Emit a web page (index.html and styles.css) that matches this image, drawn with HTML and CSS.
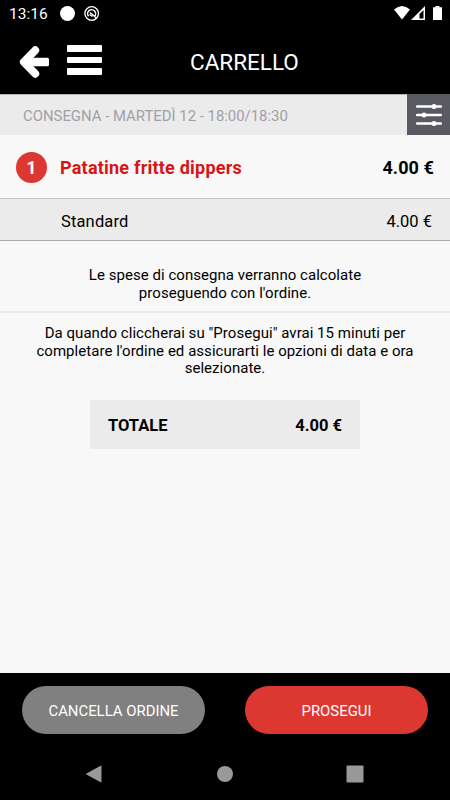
FILE: index.html
```html
<!DOCTYPE html>
<html lang="it">
<head>
    <meta charset="UTF-8">
    <meta name="viewport" content="width=device-width, initial-scale=1.0">
    <title>Carrello</title>
    <link rel="stylesheet" href="styles.css">
</head>
<body>
    <div class="status-bar">
        <span class="clock">13:16</span>
        <svg class="status-left" width="42" height="18" viewBox="0 0 42 18">
            <circle cx="7.500" cy="8.500" r="7.500" fill="#fff"/>
            <circle cx="31.700" cy="8.500" r="6.800" fill="none" stroke="#fff" stroke-width="1.300"/>
            <path d="M28.500 11.200A4 4 0 1 1 34.500 11.500M30 7.500l6.500 5.500M29.500 9.500l3 2" fill="none" stroke="#fff" stroke-width="1.500"/>
        </svg>
        <svg class="status-right" width="50" height="18" viewBox="0 0 50 18">
            <path d="M1 4.500Q9 -2.500 17 4.500L9 14.500z" fill="#fff"/>
            <path d="M32 1v14H18z" fill="#fff"/>
            <path d="M30.500 5v8.500H26.500V9z" fill="#000"/>
            <path d="M40 2.200h2.500V1h4v1.200H49V15h-9z" fill="#fff"/>
        </svg>
    </div>

    <header class="header">
        <svg class="back" width="30" height="32" viewBox="0 0 30 32">
            <path d="M16.300 4.200L4.800 16l11.500 11.800" fill="none" stroke="#fff" stroke-width="7.800" stroke-linecap="round" stroke-linejoin="round"/>
            <rect x="5" y="11.800" width="25" height="8.400" rx="1.500" fill="#fff"/>
        </svg>
        <div class="menu">
            <span></span>
            <span></span>
            <span></span>
        </div>
        <h1>CARRELLO</h1>
    </header>

    <div class="delivery">
        <span class="delivery-text">CONSEGNA - MARTEDÌ 12 - 18:00/18:30</span>
        <div class="filter">
            <svg width="26" height="22" viewBox="0 0 26 22">
                <path d="M1 2.500h24M1 11h24M1 19.500h24" stroke="#fff" stroke-width="2.300" stroke-linecap="round"/>
                <circle cx="18" cy="2.500" r="2.500" fill="#fff"/>
                <circle cx="8" cy="11" r="2.500" fill="#fff"/>
                <circle cx="18" cy="19.500" r="2.500" fill="#fff"/>
            </svg>
        </div>
    </div>

    <main class="cart">
        <div class="item">
            <span class="quantity">1</span>
            <span class="item-name">Patatine fritte dippers</span>
            <span class="item-price">4.00 €</span>
        </div>
        <div class="option">
            <span class="option-name">Standard</span>
            <span class="option-price">4.00 €</span>
        </div>
        <p class="note shipping">Le spese di consegna verranno calcolate<br>proseguendo con l'ordine.</p>
        <p class="note time">Da quando cliccherai su "Prosegui" avrai 15 minuti per<br>completare l'ordine ed assicurarti le opzioni di data e ora<br>selezionate.</p>
        <div class="total">
            <span>TOTALE</span>
            <span>4.00 €</span>
        </div>
    </main>

    <footer class="actions">
        <button class="cancel">CANCELLA ORDINE</button>
        <button class="proceed">PROSEGUI</button>
    </footer>

    <nav class="nav-bar">
        <svg width="18" height="18" viewBox="0 0 18 18"><path d="M1.500 9L16 1v16z" fill="#999" stroke="#999" stroke-linejoin="round"/></svg>
        <svg width="18" height="18" viewBox="0 0 18 18"><circle cx="9" cy="9" r="8" fill="#999"/></svg>
        <svg width="18" height="18" viewBox="0 0 18 18"><rect x="0.500" y="0.500" width="17" height="17" rx="1" fill="#999"/></svg>
    </nav>
</body>
</html>
```
FILE: styles.css
```css
* {
    box-sizing: border-box;
}
body {
    font-family: Roboto, 'Liberation Sans', sans-serif;
    background-color: #f8f8f8;
    color: #000;
    margin: 0;
    height: 800px;
    display: flex;
    flex-direction: column;
    overflow: hidden;
}
.status-bar {
    height: 28px;
    background-color: #000;
    color: #fff;
    display: flex;
    align-items: center;
    padding: 0 7px 0 9px;
}
.clock {
    width: 51px;
    margin-top: -1px;
    font-size: 15.5px;
}
.status-right {
    margin-left: auto;
}
.header {
    height: 66px;
    background-color: #000;
    color: #fff;
    display: flex;
    align-items: center;
    padding: 0 18px 0 19px;
}
.back {
    margin-top: 1px;
}
.menu {
    display: flex;
    flex-direction: column;
    gap: 5px;
    margin-left: 18px;
    margin-top: -2px;
}
.menu span {
    width: 35px;
    height: 6.5px;
    border-radius: 1px;
    background-color: #fff;
}
h1 {
    margin: 1px 0 0 88px;
    font-size: 22.5px;
    font-weight: 400;
}
.delivery {
    height: 41px;
    border-top: 1px solid #b5b5b5;
    background-color: #ebebeb;
    color: #a0a0a8;
    display: flex;
    align-items: center;
    justify-content: space-between;
    padding-left: 23px;
    font-size: 14.9px;
}
.delivery-text {
    padding-top: 2px;
}
.filter {
    width: 43px;
    height: 41px;
    margin-top: -1px;
    background-color: #595961;
    display: flex;
    align-items: center;
    justify-content: center;
}
.cart {
    flex: 1;
}
.item {
    height: 63px;
    display: flex;
    align-items: center;
    padding: 2px 16px 0;
    font-size: 18px;
    font-weight: 700;
}
.quantity {
    width: 31px;
    height: 31px;
    border-radius: 50%;
    background-color: #dc3731;
    color: #fff;
    line-height: 32px;
    text-align: center;
}
.item-name {
    margin-left: 13px;
    color: #d81414;
    letter-spacing: 0.22px;
}
.item-price {
    margin-left: auto;
    letter-spacing: 0.1px;
}
.option {
    height: 43px;
    border-top: 1px solid #c4c4c4;
    border-bottom: 1px solid #aaa;
    background-color: #ebebeb;
    display: flex;
    align-items: center;
    justify-content: space-between;
    padding: 3px 18px 0 61px;
    font-size: 16.5px;
}
.option-name {
    letter-spacing: 0.15px;
}
.note {
    margin: 0;
    font-size: 15px;
    line-height: 17.5px;
    letter-spacing: 0.04px;
    text-align: center;
}
.shipping {
    height: 72px;
    padding-top: 26px;
    border-bottom: 2px solid #ebebeb;
}
.time {
    height: 87px;
    padding-top: 12px;
}
.total {
    width: 270px;
    height: 49px;
    margin: 0 auto;
    padding: 2px 18px 0;
    background-color: #ebebeb;
    display: flex;
    align-items: center;
    justify-content: space-between;
    font-size: 16.5px;
    font-weight: 700;
}
.actions {
    height: 74px;
    background-color: #000;
    display: flex;
    justify-content: space-between;
    padding: 13px 22px;
}
button {
    width: 183px;
    height: 48px;
    padding: 2px 0 0;
    border: none;
    border-radius: 24px;
    color: #fff;
    font-family: inherit;
    font-size: 14.9px;
}
.cancel {
    background-color: #808080;
}
.proceed {
    background-color: #dc3731;
}
.nav-bar {
    height: 53px;
    background-color: #000;
    display: flex;
    align-items: center;
    justify-content: space-between;
    padding: 0 86px 0 85px;
}
```
